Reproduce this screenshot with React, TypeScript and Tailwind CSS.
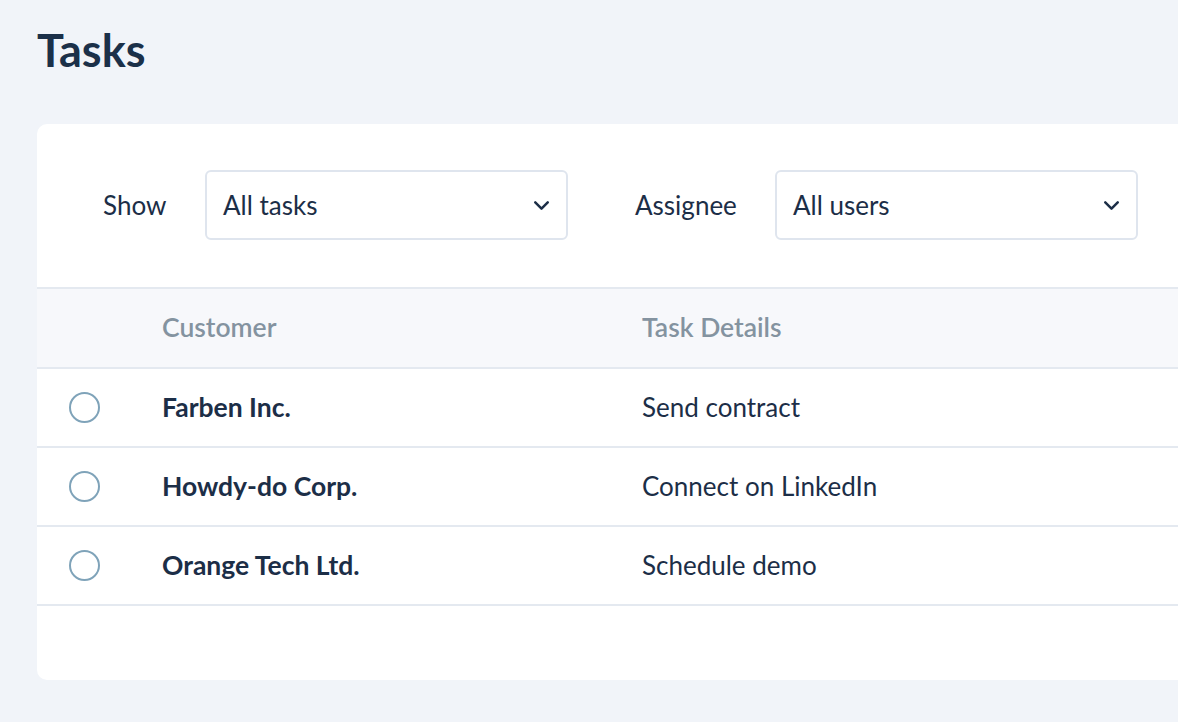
import { ChevronDown } from "lucide-react";

const tasks = [
    { customer: "Farben Inc.", details: "Send contract" },
    { customer: "Howdy-do Corp.", details: "Connect on LinkedIn" },
    { customer: "Orange Tech Ltd.", details: "Schedule demo" },
];

function Select({ value }: { value: string }) {
    return (
        <div className="flex items-center justify-between w-[363px] h-[70px] rounded-[6px] border-2 border-[#dfe5ee] bg-white pl-[16px] pr-[12px]">
            <span className="text-[26px] text-[#1c2e47]">{value}</span>
            <ChevronDown className="w-[25px] h-[25px] text-[#1c2e47]" strokeWidth={2.4} />
        </div>
    );
}

export default function App() {
    return (
        <div
            className="w-[1178px] h-[722px] overflow-hidden bg-[#f1f4f9] pl-[37px] pt-[22px]"
            style={{ fontFamily: "Lato, 'Open Sans', sans-serif" }}
        >
            <h1 className="text-[45px] font-bold leading-[56px] text-[#1b3049]">Tasks</h1>

            <div className="mt-[46px] w-[1200px] h-[556px] rounded-[10px] bg-white">
                {/* filtri */}
                <div className="flex items-center pl-[66px] pt-[46px] pb-[47px]">
                    <span className="w-[102px] text-[26px] text-[#1c2e47]">Show</span>
                    <Select value="All tasks" />
                    <span className="w-[207px] pl-[67px] text-[26px] text-[#1c2e47]">Assignee</span>
                    <Select value="All users" />
                </div>

                <div className="grid grid-cols-[125px_480px_1fr] border-t-2 border-[#e4e9f0] bg-[#f7f8fb] h-[80px] items-center">
                    <div />
                    <div className="text-[26.5px] font-semibold text-[#8493a0]">Customer</div>
                    <div className="text-[26.5px] font-semibold text-[#8493a0]">Task Details</div>
                </div>

                {tasks.map((t) => (
                    <div
                        key={t.customer}
                        className="grid grid-cols-[125px_480px_1fr] border-t-2 border-[#e4e9f0] h-[79px] items-center"
                    >
                        <div className="pl-[32px]">
                            <div className="w-[31px] h-[31px] rounded-full border-2 border-[#7fa3b9]" />
                        </div>
                        <div className="text-[26.5px] font-bold text-[#1c2e47]">{t.customer}</div>
                        <div className="text-[26px] text-[#1c2e47]">{t.details}</div>
                    </div>
                ))}
                <div className="border-t-2 border-[#e4e9f0]" />
            </div>
        </div>
    );
}
